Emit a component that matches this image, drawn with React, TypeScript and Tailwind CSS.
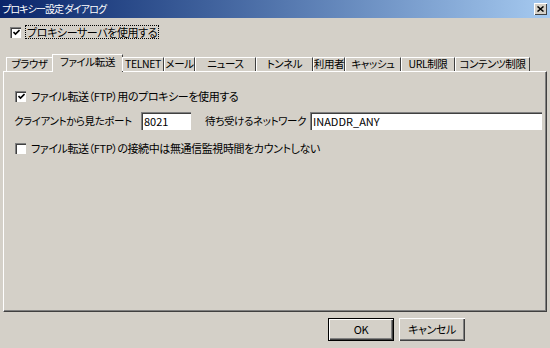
import { type FC } from "react";

const font =
  "font-['Noto_Sans_CJK_JP',sans-serif] [font-feature-settings:'palt'] tracking-[-0.4px] whitespace-nowrap";

const Check: FC<{ checked?: boolean }> = ({ checked }) => (
  <span className="flex h-[11px] w-[11px] shrink-0 items-center justify-center border-t border-l border-[#808080] border-r-white border-b-white bg-white shadow-[inset_1px_1px_0_#404040]">
    {checked && (
      <svg width="7" height="7" viewBox="0 0 7 7">
        <path d="M0.5 3 L2.5 5 L6.5 1" stroke="#000" strokeWidth="1.6" fill="none" />
      </svg>
    )}
  </span>
);

const tabs = [
  { label: "ブラウザ", w: 47 },
  { label: "ファイル転送", w: 71, active: true },
  { label: "TELNET", w: 42 },
  { label: "メール", w: 31 },
  { label: "ニュース", w: 61 },
  { label: "トンネル", w: 57 },
  { label: "利用者", w: 32 },
  { label: "キャッシュ", w: 56 },
  { label: "URL制限", w: 54 },
  { label: "コンテンツ制限", w: 75 },
];

const Field: FC<{ value: string; className: string }> = ({ value, className }) => (
  <div
    className={`flex h-[18px] shrink-0 items-center border-t border-l border-[#808080] border-r-white border-b-white bg-white pl-[2px] text-[11px] leading-none tracking-normal text-black shadow-[inset_1px_1px_0_#404040] ${className}`}
  >
    {value}
  </div>
);

const Button: FC<{ label: string; primary?: boolean }> = ({ label, primary }) => (
  <button
    className={`flex h-[23px] w-[66px] items-center justify-center bg-[#d4d0c8] text-[11px] leading-none text-black ${
      primary
        ? "border border-black shadow-[inset_1px_1px_0_#fff,inset_-1px_-1px_0_#404040,inset_-2px_-2px_0_#808080]"
        : "shadow-[inset_1px_1px_0_#fff,inset_-1px_-1px_0_#404040,inset_-2px_-2px_0_#808080]"
    }`}
  >
    {label}
  </button>
);

export default function App() {
  return (
    <div className={`flex h-[348px] w-[550px] flex-col overflow-hidden bg-[#d4d0c8] ${font}`}>
      <div className="flex h-[18px] shrink-0 items-center justify-between bg-gradient-to-r from-[#0a246a] to-[#a6caf0] pr-[3px] pl-[2px]">
        <span className="text-[10px] leading-none tracking-[-0.9px] text-white">プロキシー設定 ダイアログ</span>
        <span className="flex h-[12px] w-[13px] items-center justify-center bg-[#d4d0c8] shadow-[inset_1px_1px_0_#fff,inset_-1px_-1px_0_#404040]">
          <svg width="7" height="6" viewBox="0 0 7 6">
            <path d="M0.5 0.5 L6.5 5.5 M6.5 0.5 L0.5 5.5" stroke="#000" strokeWidth="1.5" />
          </svg>
        </span>
      </div>

      <div className="mt-[7px] flex h-[14px] shrink-0 items-center gap-[4px] pl-[10px]">
        <Check checked />
        <span className="border border-dotted border-black px-[1px] text-[11px] leading-[12px] text-black">
          プロキシーサーバを使用する
        </span>
      </div>

      <div className="relative z-10 mt-[15px] flex h-[17px] shrink-0 items-end pl-[6px]">
        {tabs.map((tab) => (
          <div
            key={tab.label}
            style={{ width: tab.w }}
            className={`flex shrink-0 items-center justify-center border-t border-l border-r border-white border-r-[#404040] bg-[#d4d0c8] text-[10.5px] leading-none text-black ${
              tab.active ? "-mx-[1px] -mb-[1px] h-[18px] pb-[2px]" : "h-[14px]"
            }`}
          >
            {tab.label}
          </div>
        ))}
      </div>

      <div className="mx-[3px] h-[241px] shrink-0 border border-white border-r-[#404040] border-b-[#404040] shadow-[inset_-1px_-1px_0_#808080]">
        <div className="mt-[16px] flex h-[16px] items-center gap-[5px] pl-[11px] text-[11px] leading-none text-black">
          <Check checked />
          <span>ファイル転送（FTP）用のプロキシーを使用する</span>
        </div>
        <div className="mt-[8px] flex h-[18px] items-center pl-[10px] text-[10.5px] leading-none text-black">
          <span className="w-[127px] shrink-0">クライアントから見たポート</span>
          <Field value="8021" className="w-[50px]" />
          <span className="ml-[14px] w-[105px] shrink-0">待ち受けるネットワーク</span>
          <Field value="INADDR_ANY" className="w-[232px]" />
        </div>
        <div className="mt-[10px] flex h-[16px] items-center gap-[5px] pl-[11px] text-[11px] leading-none text-black">
          <Check />
          <span>ファイル転送（FTP）の接続中は無通信監視時間をカウントしない</span>
        </div>
      </div>

      <div className="mt-[6px] flex gap-[5px] pl-[328px]">
        <Button label="OK" primary />
        <Button label="キャンセル" />
      </div>
    </div>
  );
}
